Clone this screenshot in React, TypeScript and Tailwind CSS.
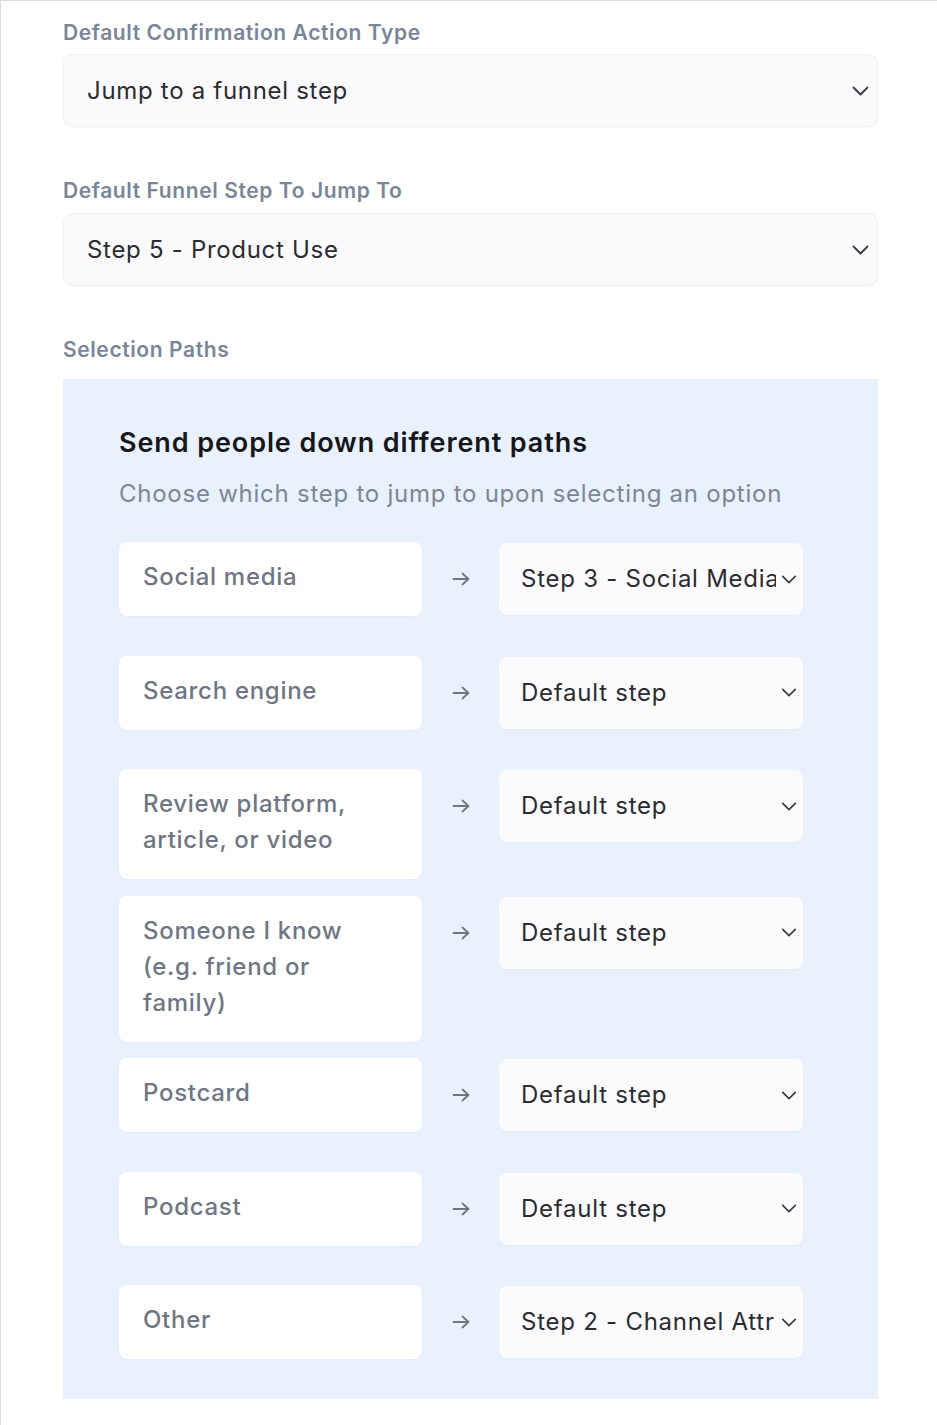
import { ReactNode } from "react";

const paths = [
  { label: "Social media", step: "Step 3 - Social Media Attribution" },
  { label: "Search engine", step: "Default step" },
  { label: "Review platform, article, or video", step: "Default step" },
  { label: "Someone I know (e.g. friend or family)", step: "Default step" },
  { label: "Postcard", step: "Default step" },
  { label: "Podcast", step: "Default step" },
  { label: "Other", step: "Step 2 - Channel Attribution" },
];

const Chevron = ({ className = "" }: { className?: string }) => (
  <svg
    className={className}
    width="17"
    height="10"
    viewBox="0 0 17 10"
    fill="none"
    stroke="currentColor"
    strokeWidth="1.8"
    strokeLinecap="round"
    strokeLinejoin="round"
  >
    <path d="M1.5 1.5l7 7 7-7" />
  </svg>
);

const Arrow = () => (
  <svg
    width="18"
    height="14"
    viewBox="0 0 18 14"
    fill="none"
    stroke="currentColor"
    strokeWidth="1.8"
    strokeLinecap="round"
    strokeLinejoin="round"
  >
    <path d="M1.5 7h15M10.5 1.5L16.5 7l-6 5.5" />
  </svg>
);

const FieldLabel = ({ children }: { children: ReactNode }) => (
  <div className="text-[21px] leading-[30px] font-semibold tracking-[0.6px] text-[#7a8598]">
    {children}
  </div>
);

const BigSelect = ({ value }: { value: string }) => (
  <div className="h-[73px] flex items-center justify-between pl-[23px] pr-[8px] rounded-[10px] bg-[#fafafd] border border-[#f1f1f6] shadow-[0_1px_2px_rgba(0,0,0,0.03)]">
    <span className="text-[24px] tracking-[0.7px] text-[#2b2b30]">{value}</span>
    <Chevron className="text-[#3a3a40]" />
  </div>
);

export default function App() {
  return (
    <div
      className="min-h-[1425px] bg-white border-l border-t border-[#dadada] pl-[62px] pr-[59px] pt-[17px]"
      style={{ fontFamily: "Inter, 'Noto Sans', sans-serif" }}
    >
      {/* Confirmation action */}
      <FieldLabel>Default Confirmation Action Type</FieldLabel>
      <div className="mt-[6px]">
        <BigSelect value="Jump to a funnel step" />
      </div>

      <div className="mt-[49px]">
        <FieldLabel>Default Funnel Step To Jump To</FieldLabel>
      </div>
      <div className="mt-[7px]">
        <BigSelect value="Step 5 - Product Use" />
      </div>

      <div className="mt-[49px]">
        <FieldLabel>Selection Paths</FieldLabel>
      </div>

      {/* Paths panel */}
      <div className="mt-[14px] bg-[#e9f1fc] pl-[56px] pt-[46px] pb-[17px]">
        <h3 className="text-[27px] leading-[36px] font-semibold tracking-[0.9px] text-[#15171c]">
          Send people down different paths
        </h3>
        <p className="mt-[15px] text-[24px] leading-[36px] tracking-[0.75px] text-[#7d8696]">
          Choose which step to jump to upon selecting an option
        </p>

        <div className="mt-[30px] flex flex-col gap-[16.5px]">
          {paths.map((p) => (
            <div key={p.label} className="flex items-start min-h-[97px]">
              <div className="w-[303px] bg-white rounded-[8px] pl-[24px] pr-[30px] pt-[17px] pb-[21px] text-[24px] leading-[36px] font-medium tracking-[0.7px] text-[#6f7683] shadow-[0_1px_2px_rgba(0,0,0,0.03)]">
                {p.label}
              </div>
              <div className="w-[77px] h-[72px] mt-[1px] flex items-center justify-center text-[#6e7684]">
                <Arrow />
              </div>
              <div className="w-[304px] h-[72px] mt-[1px] flex items-center pl-[22px] pr-[6px] rounded-[8px] bg-[#fbfbfe] shadow-[0_1px_2px_rgba(0,0,0,0.03)]">
                <span className="flex-1 overflow-hidden whitespace-nowrap text-[24px] tracking-[0.75px] text-[#2b2b30]">
                  {p.step}
                </span>
                <Chevron className="ml-[5px] shrink-0 w-[16px] h-[9px] text-[#3a3a40]" />
              </div>
            </div>
          ))}
        </div>
      </div>
    </div>
  );
}
